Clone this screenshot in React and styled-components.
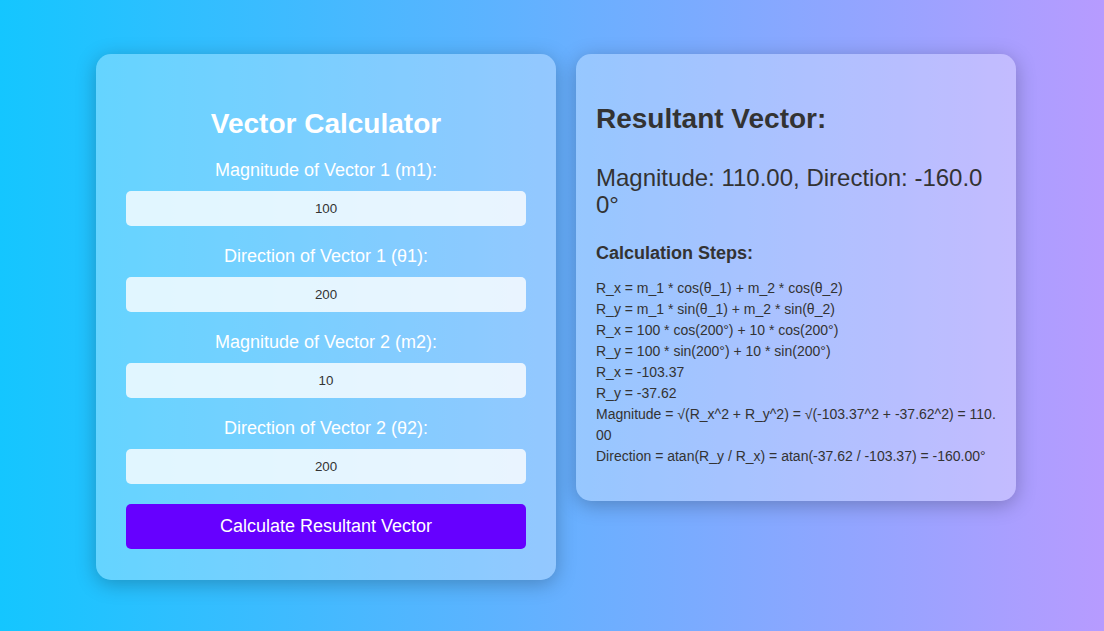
import React from "react";
import styled, { createGlobalStyle } from "styled-components";

const GlobalStyle = createGlobalStyle`
  html, body {
    margin: 0;
    padding: 0;
  }
  body {
    font-family: "Liberation Sans", Arial, sans-serif;
    background: linear-gradient(90deg, #14c6ff 0%, #b79bff 100%);
    min-height: 100vh;
  }
`;

const Page = styled.div`
  min-height: 100vh;
  display: flex;
  justify-content: center;
  align-items: center;
  padding-left: 8px;
  padding-top: 2px;
  box-sizing: border-box;
`;

const Row = styled.div`
  display: flex;
  align-items: flex-start;
  gap: 20px;
`;

const Card = styled.div`
  box-sizing: border-box;
  width: ${(p) => p.$width}px;
  padding: ${(p) => p.$pad};
  background: rgba(255, 255, 255, 0.3);
  border-radius: 15px;
  box-shadow: 0 4px 20px rgba(0, 0, 0, 0.25);
`;

const Title = styled.h2`
  margin: 24px 0 20px;
  font-size: 28px;
  line-height: 32px;
  font-weight: bold;
  color: #ffffff;
  text-align: center;
`;

const Field = styled.div`
  display: flex;
  flex-direction: column;
  margin-bottom: 20px;
`;

const Label = styled.label`
  display: block;
  font-size: 18px;
  line-height: 21px;
  color: #ffffff;
  text-align: center;
  margin-bottom: 10px;
`;

const Input = styled.input`
  box-sizing: border-box;
  width: 100%;
  height: 35px;
  border: none;
  border-radius: 5px;
  background: rgba(255, 255, 255, 0.8);
  color: #333;
  font-family: "Liberation Sans", Arial, sans-serif;
  font-size: 13.33px;
  text-align: center;
  outline: none;
  padding: 0 10px;
`;

const Button = styled.button`
  display: block;
  width: 100%;
  height: 45px;
  border: none;
  border-radius: 5px;
  background: #6600ff;
  color: #ffffff;
  font-family: "Liberation Sans", Arial, sans-serif;
  font-size: 18px;
  cursor: pointer;
`;

const ResultTitle = styled.h2`
  margin: 29px 0 29px;
  font-size: 28px;
  line-height: 32px;
  font-weight: bold;
  color: #333;
`;

const ResultText = styled.p`
  margin: 0 0 24px;
  font-size: 24px;
  line-height: 27.6px;
  color: #333;
  word-break: break-all;
`;

const StepsTitle = styled.h3`
  margin: 0 0 14px;
  font-size: 18px;
  line-height: 21px;
  font-weight: bold;
  color: #333;
`;

const Steps = styled.div`
  font-size: 14px;
  line-height: 21px;
  color: #333;
  word-break: break-all;
  margin-bottom: 14px;
`;

const StepLine = styled.div``;

const fields = [
  { label: "Magnitude of Vector 1 (m1):", value: "100" },
  { label: "Direction of Vector 1 (θ1):", value: "200" },
  { label: "Magnitude of Vector 2 (m2):", value: "10" },
  { label: "Direction of Vector 2 (θ2):", value: "200" },
];

const steps = [
  "R_x = m_1 * cos(θ_1) + m_2 * cos(θ_2)",
  "R_y = m_1 * sin(θ_1) + m_2 * sin(θ_2)",
  "R_x = 100 * cos(200°) + 10 * cos(200°)",
  "R_y = 100 * sin(200°) + 10 * sin(200°)",
  "R_x = -103.37",
  "R_y = -37.62",
  "Magnitude = √(R_x^2 + R_y^2) = √(-103.37^2 + -37.62^2) = 110.00",
  "Direction = atan(R_y / R_x) = atan(-37.62 / -103.37) = -160.00°",
];

export default function App() {
  return (
    <>
      <GlobalStyle />
      <Page>
        <Row>
          <Card $width={460} $pad="30px 30px 31px">
            <Title>Vector Calculator</Title>
            {fields.map((f) => (
              <Field key={f.label}>
                <Label>{f.label}</Label>
                <Input type="text" defaultValue={f.value} />
              </Field>
            ))}
            <Button>Calculate Resultant Vector</Button>
          </Card>
          <Card $width={440} $pad="20px">
            <ResultTitle>Resultant Vector:</ResultTitle>
            <ResultText>Magnitude: 110.00, Direction: -160.00°</ResultText>
            <StepsTitle>Calculation Steps:</StepsTitle>
            <Steps>
              {steps.map((s) => (
                <StepLine key={s}>{s}</StepLine>
              ))}
            </Steps>
          </Card>
        </Row>
      </Page>
    </>
  );
}
